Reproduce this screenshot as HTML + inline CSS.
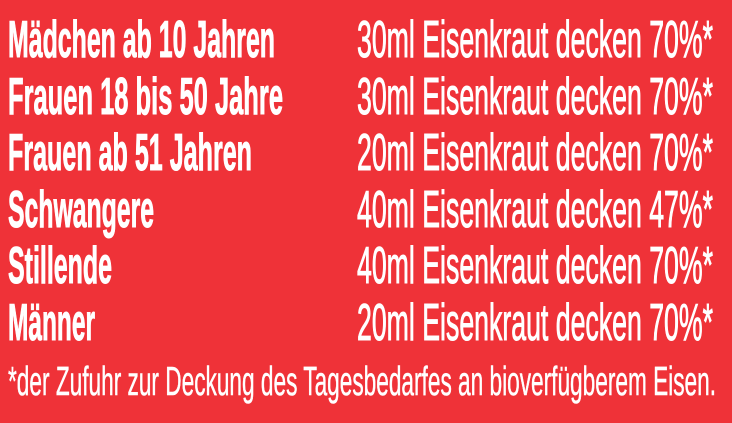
<!DOCTYPE html>
<html><head><meta charset="utf-8"><style>
html,body{margin:0;padding:0;background:#ef3238;width:732px;height:423px;overflow:hidden}
svg{display:block}
text{fill:#fff;font-family:"Liberation Sans",sans-serif}
.l{font-weight:bold;font-size:52px;stroke:#fff;stroke-width:1}
.r{font-size:52px;stroke:#fff;stroke-width:1}
.f{font-size:41px;stroke:#fff;stroke-width:0.5}
</style></head><body>
<svg width="732" height="423" viewBox="0 0 732 423">
<rect width="732" height="423" fill="#ef3238"/>
<text class="l" x="8" y="57" textLength="267" lengthAdjust="spacingAndGlyphs">Mädchen ab 10 Jahren</text>
<text class="l" x="8" y="114" textLength="275" lengthAdjust="spacingAndGlyphs">Frauen 18 bis 50 Jahre</text>
<text class="l" x="8" y="170" textLength="244" lengthAdjust="spacingAndGlyphs">Frauen ab 51 Jahren</text>
<text class="l" x="8" y="227" textLength="146" lengthAdjust="spacingAndGlyphs">Schwangere</text>
<text class="l" x="8" y="283" textLength="104" lengthAdjust="spacingAndGlyphs">Stillende</text>
<text class="l" x="8" y="340" textLength="87" lengthAdjust="spacingAndGlyphs">Männer</text>
<text class="r" x="357" y="57" textLength="356" lengthAdjust="spacingAndGlyphs">30ml Eisenkraut decken 70%*</text>
<text class="r" x="357" y="114" textLength="356" lengthAdjust="spacingAndGlyphs">30ml Eisenkraut decken 70%*</text>
<text class="r" x="357" y="170" textLength="356" lengthAdjust="spacingAndGlyphs">20ml Eisenkraut decken 70%*</text>
<text class="r" x="357" y="227" textLength="356" lengthAdjust="spacingAndGlyphs">40ml Eisenkraut decken 47%*</text>
<text class="r" x="357" y="283" textLength="356" lengthAdjust="spacingAndGlyphs">40ml Eisenkraut decken 70%*</text>
<text class="r" x="357" y="340" textLength="356" lengthAdjust="spacingAndGlyphs">20ml Eisenkraut decken 70%*</text>
<text class="f" x="8" y="395" textLength="708" lengthAdjust="spacingAndGlyphs">*der Zufuhr zur Deckung des Tagesbedarfes an bioverfügberem Eisen.</text>
</svg>
</body></html>
